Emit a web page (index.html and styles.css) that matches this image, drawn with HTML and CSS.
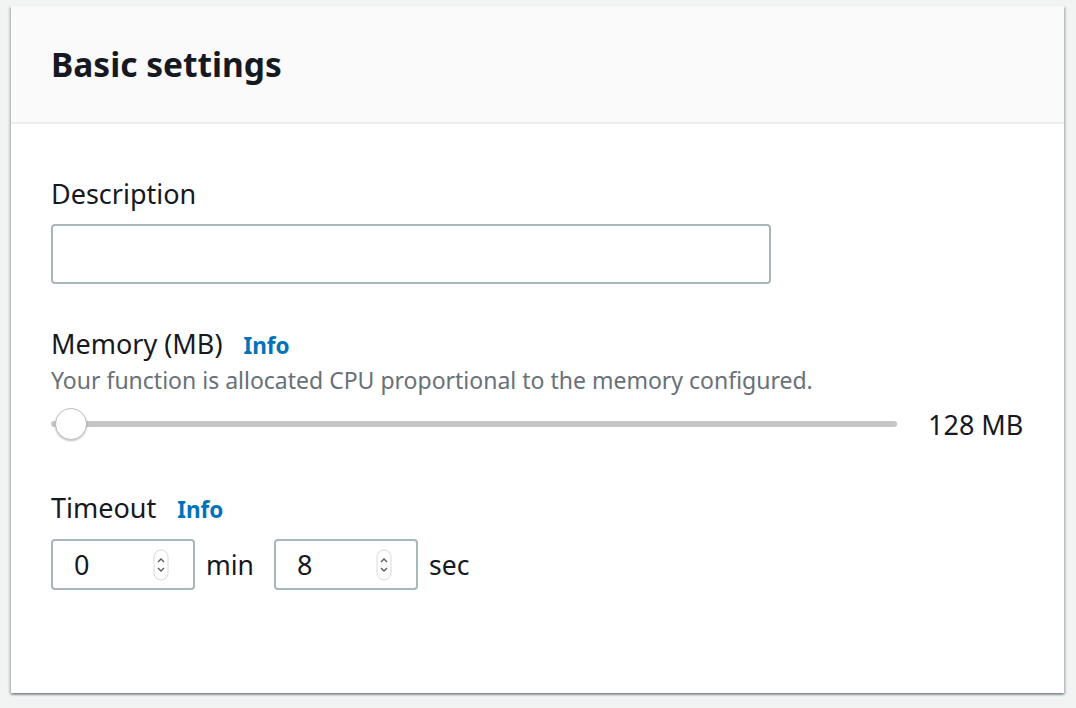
FILE: index.html
```html
<!DOCTYPE html>
<html>
<head>
<meta charset="utf-8">
<link rel="stylesheet" href="styles.css">
</head>
<body>
<div class="panel">
  <div class="panel-header">
    <h2 class="title">Basic settings</h2>
  </div>
  <div class="panel-body">
    <div class="field">
      <div class="label">Description</div>
      <div class="text-input"></div>
    </div>
    <div class="field field-memory">
      <div class="label">Memory (MB) <span class="info">Info</span></div>
      <div class="hint">Your function is allocated CPU proportional to the memory configured.</div>
      <div class="slider-row">
        <div class="slider">
          <div class="track"></div>
          <div class="thumb"></div>
        </div>
        <div class="slider-value">128 MB</div>
      </div>
    </div>
    <div class="field field-timeout">
      <div class="label">Timeout <span class="info">Info</span></div>
      <div class="timeout-row">
        <div class="num-input">
          <span class="num">0</span>
          <svg class="spin" width="16" height="32" viewBox="0 0 16 32"><rect x="1" y="1" width="14" height="30" rx="7" fill="#fff" stroke="#d5dbdb" stroke-width="1"/><path d="M5 13 L8 10 L11 13" fill="none" stroke="#545b64" stroke-width="1.4"/><path d="M5 19 L8 22 L11 19" fill="none" stroke="#545b64" stroke-width="1.4"/></svg>
        </div>
        <span class="unit">min</span>
        <div class="num-input">
          <span class="num">8</span>
          <svg class="spin" width="16" height="32" viewBox="0 0 16 32"><rect x="1" y="1" width="14" height="30" rx="7" fill="#fff" stroke="#d5dbdb" stroke-width="1"/><path d="M5 13 L8 10 L11 13" fill="none" stroke="#545b64" stroke-width="1.4"/><path d="M5 19 L8 22 L11 19" fill="none" stroke="#545b64" stroke-width="1.4"/></svg>
        </div>
        <span class="unit">sec</span>
      </div>
    </div>
  </div>
</div>
</body>
</html>
```
FILE: styles.css
```css
html, body {
  margin: 0;
  padding: 0;
}
body {
  background: #f2f3f3;
  font-family: "Noto Sans", "Open Sans", sans-serif;
  color: #16191f;
  width: 1076px;
  height: 708px;
  overflow: hidden;
}
.panel {
  margin: 6px 0 0 11px;
  width: 1053px;
  height: 687px;
  background: #fff;
  box-shadow: 0 2px 2px 0 rgba(0, 28, 36, 0.35), 2px 1px 2px 0 rgba(0, 28, 36, 0.15), -2px 1px 2px 0 rgba(0, 28, 36, 0.15);
  box-sizing: border-box;
}
.panel-header {
  height: 118px;
  background: #fafafa;
  border-bottom: 2px solid #eaeded;
  box-sizing: border-box;
  display: flex;
  align-items: center;
  padding-left: 40px;
}
.title {
  margin: 0;
  font-size: 33.5px;
  font-weight: 700;
  line-height: 40px;
  margin-top: -1px;
}
.panel-body {
  padding: 52px 40px 0 40px;
}
.field-memory {
  margin-top: 42px;
}
.field-timeout {
  margin-top: 44px;
}
.label {
  font-size: 27px;
  line-height: 36px;
  display: flex;
  align-items: baseline;
}
.info {
  color: #0073bb;
  font-weight: 700;
  font-size: 22.5px;
  margin-left: 21px;
}
.text-input {
  margin-top: 12px;
  width: 720px;
  height: 60px;
  border: 2px solid #aab7b8;
  border-radius: 4px;
  box-sizing: border-box;
}
.hint {
  color: #687078;
  font-size: 23px;
  line-height: 30px;
  margin-top: 1px;
}
.slider-row {
  display: flex;
  align-items: center;
  height: 44px;
  margin-top: 7px;
}
.slider {
  position: relative;
  width: 846px;
  height: 32px;
  display: flex;
  align-items: center;
}
.track {
  width: 100%;
  height: 6px;
  border-radius: 3px;
  background: #c6c6c6;
}
.thumb {
  position: absolute;
  left: 4px;
  top: 0;
  width: 32px;
  height: 32px;
  border-radius: 50%;
  background: #fff;
  border: 1px solid #c0c0c0;
  box-sizing: border-box;
  box-shadow: 0 1px 2px rgba(0, 0, 0, 0.25);
}
.slider-value {
  margin-left: 31px;
  font-size: 27px;
}
.timeout-row {
  display: flex;
  align-items: center;
  margin-top: 11px;
}
.num-input {
  width: 144px;
  height: 51px;
  border: 2px solid #aab7b8;
  border-radius: 4px;
  box-sizing: border-box;
  display: flex;
  align-items: center;
  justify-content: space-between;
  padding: 0 24px 0 21px;
}
.num {
  font-size: 27px;
}
.spin {
  display: block;
}
.unit {
  font-size: 26.5px;
  margin: 0 20px 0 11px;
}
```
